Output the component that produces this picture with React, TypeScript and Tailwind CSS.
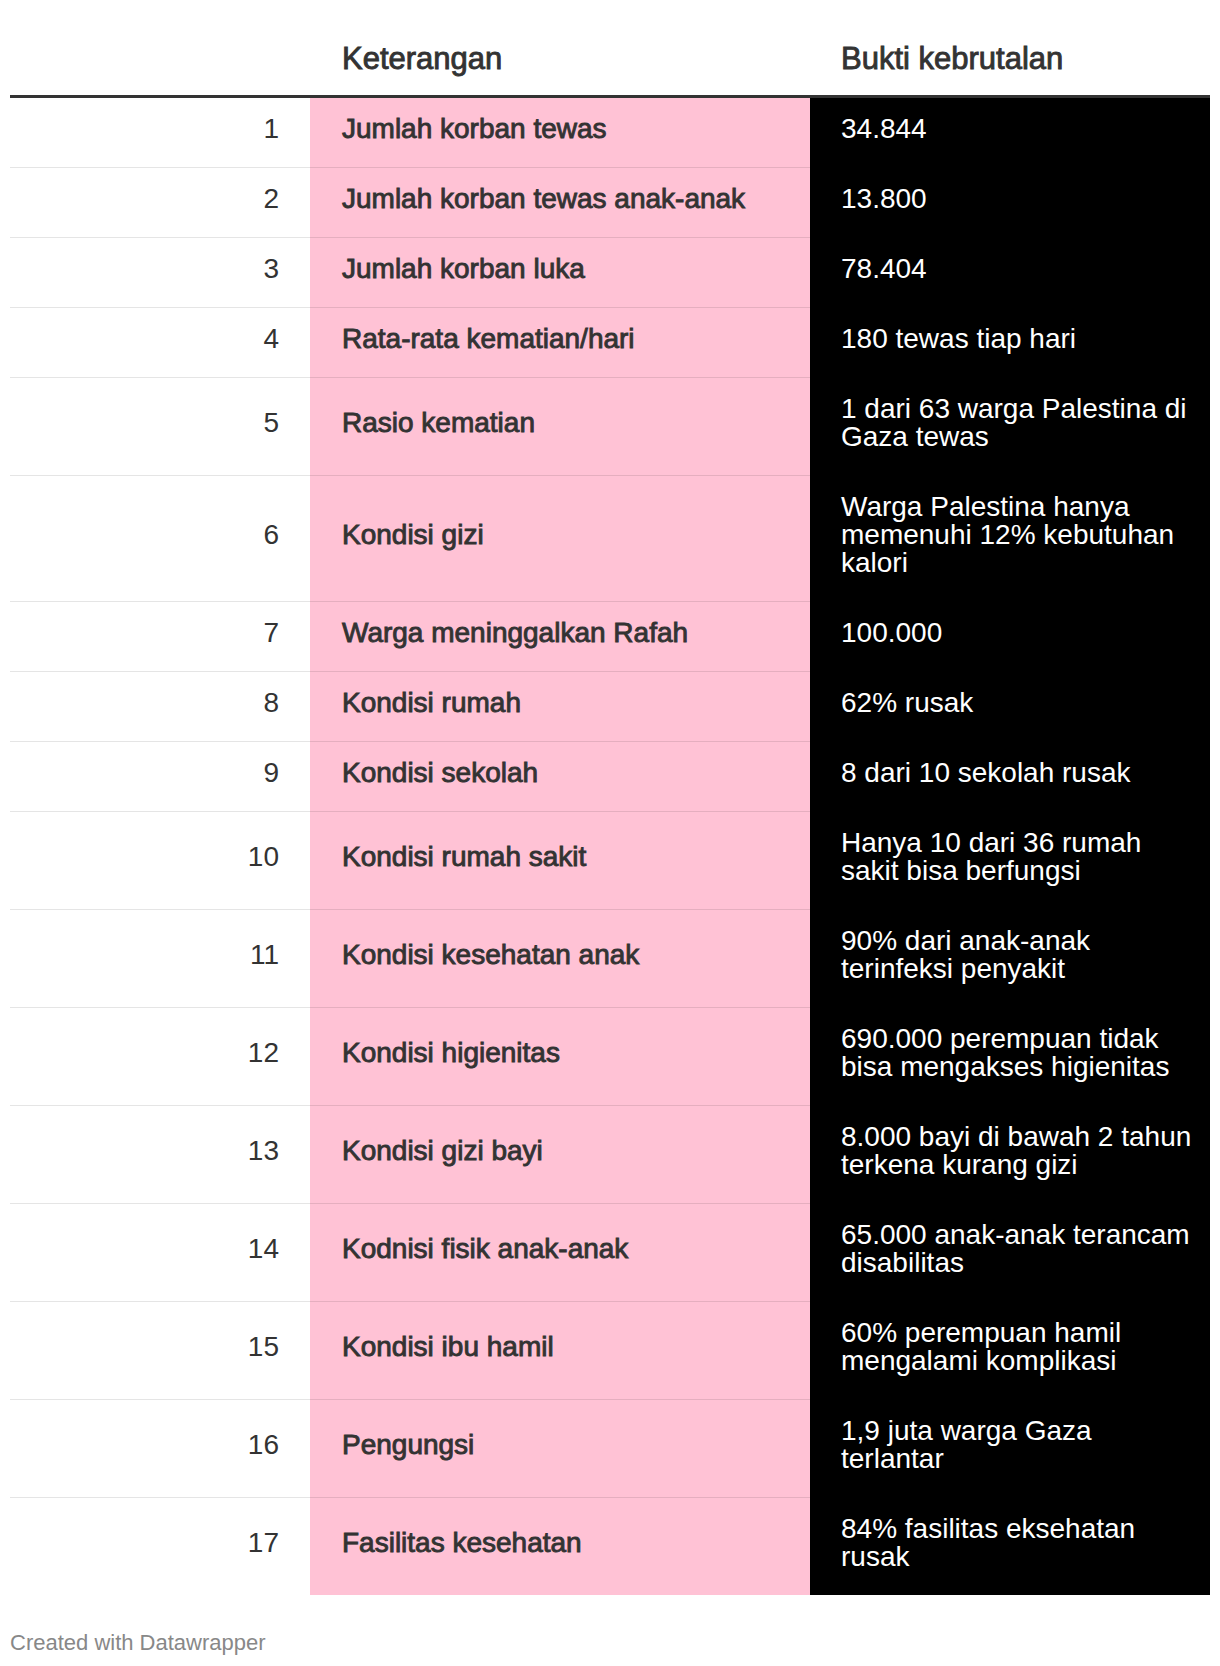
import React from "react";

type Row = { n: number; k: string; b: string };

const rows: Row[] = [
  { n: 1, k: "Jumlah korban tewas", b: "34.844" },
  { n: 2, k: "Jumlah korban tewas anak-anak", b: "13.800" },
  { n: 3, k: "Jumlah korban luka", b: "78.404" },
  { n: 4, k: "Rata-rata kematian/hari", b: "180 tewas tiap hari" },
  { n: 5, k: "Rasio kematian", b: "1 dari 63 warga Palestina di Gaza tewas" },
  { n: 6, k: "Kondisi gizi", b: "Warga Palestina hanya memenuhi 12% kebutuhan kalori" },
  { n: 7, k: "Warga meninggalkan Rafah", b: "100.000" },
  { n: 8, k: "Kondisi rumah", b: "62% rusak" },
  { n: 9, k: "Kondisi sekolah", b: "8 dari 10 sekolah rusak" },
  { n: 10, k: "Kondisi rumah sakit", b: "Hanya 10 dari 36 rumah sakit bisa berfungsi" },
  { n: 11, k: "Kondisi kesehatan anak", b: "90% dari anak-anak terinfeksi penyakit" },
  { n: 12, k: "Kondisi higienitas", b: "690.000 perempuan tidak bisa mengakses higienitas" },
  { n: 13, k: "Kondisi gizi bayi", b: "8.000 bayi di bawah 2 tahun terkena kurang gizi" },
  { n: 14, k: "Kodnisi fisik anak-anak", b: "65.000 anak-anak terancam disabilitas" },
  { n: 15, k: "Kondisi ibu hamil", b: "60% perempuan hamil mengalami komplikasi" },
  { n: 16, k: "Pengungsi", b: "1,9 juta warga Gaza terlantar" },
  { n: 17, k: "Fasilitas kesehatan", b: "84% fasilitas eksehatan rusak" },
];

export default function App() {
  return (
    <div className="min-h-[1666px] bg-white font-['Liberation_Sans',Arial,sans-serif] text-[#333333]">
      <table className="ml-[10px] w-[1200px] table-fixed border-separate border-spacing-0">
        <colgroup>
          <col className="w-[300px]" />
          <col className="w-[500px]" />
          <col className="w-[400px]" />
        </colgroup>
        <thead>
          <tr>
            <th className="border-b-[3px] border-[#333333] pt-[43px] pb-[20px]" />
            <th className="border-b-[3px] border-[#333333] pt-[43px] pb-[20px] pl-[32px] text-left align-bottom text-[31px] font-normal leading-[32px] [-webkit-text-stroke:0.9px_#333333]">
              Keterangan
            </th>
            <th className="border-b-[3px] border-[#333333] pt-[43px] pb-[20px] pl-[31px] text-left align-bottom text-[31px] font-normal leading-[32px] [-webkit-text-stroke:0.9px_#333333]">
              Bukti kebrutalan
            </th>
          </tr>
        </thead>
        <tbody>
          {rows.map((r, i) => {
            const last = i === rows.length - 1;
            const bd = last ? "" : "border-b border-[rgba(0,0,0,0.1)]";
            return (
              <tr key={r.n}>
                <td className={`${bd} pt-[17px] pb-[24px] pr-[31px] text-right align-middle text-[28px] leading-[28px]`}>
                  {r.n}
                </td>
                <td className={`${bd} bg-[#ffc2d5] pt-[17px] pb-[24px] pl-[32px] pr-[16px] text-left align-middle text-[28px] leading-[28px] [-webkit-text-stroke:0.9px_#333333]`}>
                  {r.k}
                </td>
                <td className={`${bd} bg-black pt-[17px] pb-[24px] pl-[31px] pr-[14px] text-left align-middle text-[28px] leading-[28px] text-white`}>
                  {r.b}
                </td>
              </tr>
            );
          })}
        </tbody>
      </table>
      <div className="ml-[10px] mt-[36px] text-[22px] leading-[24px] text-[#888888]">
        Created with Datawrapper
      </div>
    </div>
  );
}
